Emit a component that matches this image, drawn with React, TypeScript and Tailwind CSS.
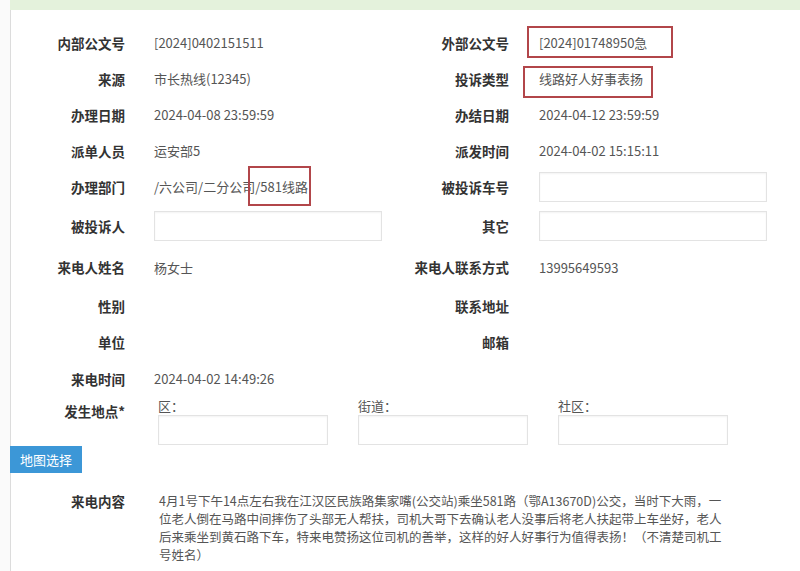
import React from "react";

const font = { fontFamily: '"Microsoft YaHei", "Noto Sans CJK SC", "Noto Sans", sans-serif' };

function Label({ children, w }: { children: React.ReactNode; w: string }) {
  return (
    <div className={`${w} shrink-0 text-right font-bold text-[13.5px] text-[#333]`}>{children}</div>
  );
}

function Val({ children }: { children?: React.ReactNode }) {
  return <div className="text-[13px] text-[#555]">{children}</div>;
}

function Input({ w }: { w: string }) {
  return (
    <div className={`${w} h-[30px] border border-[#e3e3e3] bg-white shadow-[inset_0_1px_2px_rgba(0,0,0,0.05)]`} />
  );
}

function Row({
  h,
  l1,
  v1,
  l2,
  v2,
}: {
  h: string;
  l1: string;
  v1?: React.ReactNode;
  l2?: string;
  v2?: React.ReactNode;
}) {
  return (
    <div className={`flex items-center ${h}`}>
      <div className="flex items-center w-[385px] shrink-0">
        <Label w="w-[114px]">{l1}</Label>
        <div className="ml-[29px] flex items-center">{v1}</div>
      </div>
      <div className="flex items-center">
        <Label w="w-[113px]">{l2}</Label>
        <div className="ml-[30px] flex items-center">{v2}</div>
      </div>
    </div>
  );
}

export default function App() {
  return (
    <div className="w-[800px] h-[571px] bg-[#fafafa] overflow-hidden relative" style={font}>
      <div className="ml-[10px] h-[10px] bg-[#e4f2dc]" />
      <div className="ml-[10px] border-l border-[#dcdcdc] bg-white h-[561px] relative">
        <div className="pt-[15px]">
          <Row h="h-[36px]" l1="内部公文号" v1={<Val>[2024]0402151511</Val>} l2="外部公文号" v2={<Val>[2024]01748950急</Val>} />
          <Row h="h-[36px]" l1="来源" v1={<Val>市长热线(12345)</Val>} l2="投诉类型" v2={<Val>线路好人好事表扬</Val>} />
          <Row h="h-[36px]" l1="办理日期" v1={<Val>2024-04-08 23:59:59</Val>} l2="办结日期" v2={<Val>2024-04-12 23:59:59</Val>} />
          <Row h="h-[36px]" l1="派单人员" v1={<Val>运安部5</Val>} l2="派发时间" v2={<Val>2024-04-02 15:15:11</Val>} />
          <Row h="h-[36px]" l1="办理部门" v1={<Val>/六公司/二分公司/581线路</Val>} l2="被投诉车号" v2={<Input w="w-[228px]" />} />
          <Row h="h-[42px]" l1="被投诉人" v1={<Input w="w-[228px]" />} l2="其它" v2={<Input w="w-[228px]" />} />
          <Row h="h-[41px]" l1="来电人姓名" v1={<Val>杨女士</Val>} l2="来电人联系方式" v2={<Val>13995649593</Val>} />
          <Row h="h-[36px]" l1="性别" l2="联系地址" />
          <Row h="h-[37px]" l1="单位" l2="邮箱" />
          <Row h="h-[36px]" l1="来电时间" v1={<Val>2024-04-02 14:49:26</Val>} />
          <div className="flex h-[49px]">
            <div className="w-[114px] pt-[4px] text-right font-bold text-[13.5px] text-[#333]">发生地点*</div>
            <div className="ml-[33px] flex gap-[30px]">
              {["区：", "街道：", "社区："].map((t) => (
                <div key={t} className="flex flex-col w-[170px]">
                  <div className="text-[13px] text-[#555] leading-[18px]">{t}</div>
                  <Input w="w-[170px]" />
                </div>
              ))}
            </div>
          </div>
        </div>
        <div className="-ml-px w-[72px] h-[27px] bg-[#3c97d7] text-white text-[13px] flex items-center justify-center">
          地图选择
        </div>
        <div className="flex mt-[19px] ml-[24px]">
          <div className="w-[90px] text-right font-bold text-[13.5px] text-[#333] leading-[18px]">来电内容</div>
          <div className="ml-[34px] text-[12.5px] text-[#555] leading-[18px] w-[600px]">
            <div>4月1号下午14点左右我在江汉区民族路集家嘴(公交站)乘坐581路（鄂A13670D)公交，当时下大雨，一</div>
            <div>位老人倒在马路中间摔伤了头部无人帮扶，司机大哥下去确认老人没事后将老人扶起带上车坐好，老人</div>
            <div>后来乘坐到黄石路下车，特来电赞扬这位司机的善举，这样的好人好事行为值得表扬！（不清楚司机工</div>
            <div>号姓名）</div>
          </div>
        </div>
      </div>
      <div className="absolute left-[527px] top-[26px] w-[146px] h-[32px] border-2 border-[#b2464a]" />
      <div className="absolute left-[523px] top-[66px] w-[130px] h-[32px] border-2 border-[#b2464a]" />
      <div className="absolute left-[248px] top-[166px] w-[63px] h-[40px] border-2 border-[#b2464a]" />
    </div>
  );
}
